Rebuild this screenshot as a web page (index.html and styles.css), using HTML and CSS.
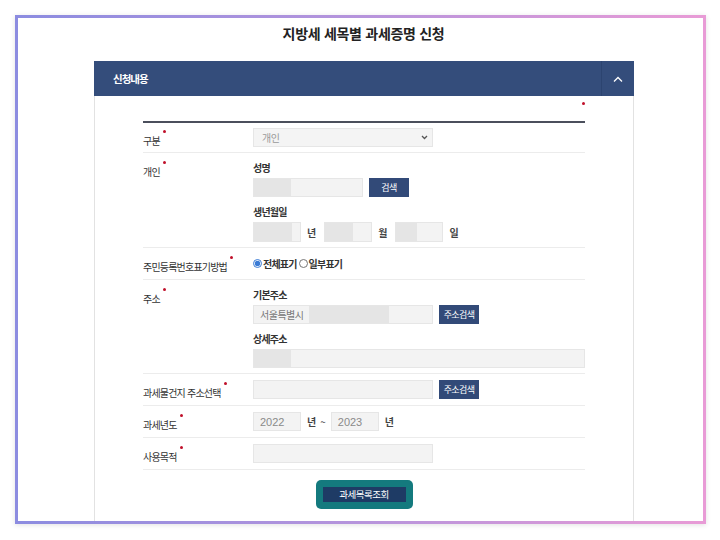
FILE: index.html
```html
<!DOCTYPE html>
<html lang="ko">
<head>
    <meta charset="UTF-8">
    <title>지방세 세목별 과세증명 신청</title>
    <link rel="stylesheet" href="styles.css">
</head>
<body>
    <div class="frame">
        <h1 class="title">지방세 세목별 과세증명 신청</h1>
        <div class="panel">
            <div class="panel-head">
                <span class="panel-title">신청내용</span>
                <span class="panel-toggle">
                    <svg width="10" height="6" viewBox="0 0 10 6"><path d="M1 5.5 L5 1.5 L9 5.5" fill="none" stroke="#fff" stroke-width="1.3"/></svg>
                </span>
            </div>
            <div class="panel-body">
                <div class="req-note"><i class="dot"></i></div>
                <div class="form">
                    <div class="row">
                        <div class="label">구분<i class="dot"></i></div>
                        <div class="field">
                            <div class="select w180">
                                <span>개인</span>
                                <svg width="7" height="5" viewBox="0 0 7 5"><path d="M1 1 L3.5 3.5 L6 1" fill="none" stroke="#555" stroke-width="1.3"/></svg>
                            </div>
                        </div>
                    </div>
                    <div class="row">
                        <div class="label">개인<i class="dot"></i></div>
                        <div class="field stack">
                            <div class="sub">성명</div>
                            <div class="line">
                                <div class="input w110"><span class="mask m37"></span></div>
                                <button class="btn">검색</button>
                            </div>
                            <div class="sub">생년월일</div>
                            <div class="line">
                                <div class="input w48 tall"><span class="mask m38"></span></div>
                                <span class="unit">년</span>
                                <div class="input w48 tall"><span class="mask m28"></span></div>
                                <span class="unit">월</span>
                                <div class="input w48 tall"><span class="mask m21"></span></div>
                                <span class="unit">일</span>
                            </div>
                        </div>
                    </div>
                    <div class="row">
                        <div class="label">주민등록번호표기방법<i class="dot"></i></div>
                        <div class="field radios">
                            <label><input type="radio" name="rrn" checked>전체표기</label>
                            <label><input type="radio" name="rrn">일부표기</label>
                        </div>
                    </div>
                    <div class="row">
                        <div class="label">주소<i class="dot"></i></div>
                        <div class="field stack">
                            <div class="sub">기본주소</div>
                            <div class="line">
                                <div class="input w180 text">서울특별시<span class="mask m80"></span></div>
                                <button class="btn">주소검색</button>
                            </div>
                            <div class="sub">상세주소</div>
                            <div class="line">
                                <div class="input wfull"><span class="mask m37"></span></div>
                            </div>
                        </div>
                    </div>
                    <div class="row">
                        <div class="label">과세물건지 주소선택<i class="dot"></i></div>
                        <div class="field">
                            <div class="input w180"></div>
                            <button class="btn">주소검색</button>
                        </div>
                    </div>
                    <div class="row">
                        <div class="label">과세년도<i class="dot"></i></div>
                        <div class="field">
                            <div class="input w48 text num">2022</div>
                            <span class="unit">년</span>
                            <span class="tilde">~</span>
                            <div class="input w48 text num">2023</div>
                            <span class="unit">년</span>
                        </div>
                    </div>
                    <div class="row">
                        <div class="label">사용목적<i class="dot"></i></div>
                        <div class="field">
                            <div class="input w180"></div>
                        </div>
                    </div>
                </div>
                <div class="actions">
                    <div class="submit-wrap">
                        <button class="submit">과세목록조회</button>
                    </div>
                </div>
            </div>
        </div>
    </div>
</body>
</html>
```

FILE: styles.css
```css
* {
    margin: 0;
    padding: 0;
    box-sizing: border-box;
}

body {
    background: #fff;
    font-family: "Noto Sans CJK KR", "Noto Sans", sans-serif;
    color: #333;
    width: 720px;
    height: 540px;
    overflow: hidden;
}

.frame {
    margin: 15px 0 0 15px;
    width: 691px;
    height: 509px;
    border: 3px solid #a090dc;
    border-image: linear-gradient(90deg, #8c8ce0, #b694dc 50%, #e89bd6) 1;
    box-shadow: 0 1px 5px rgba(0, 0, 0, 0.12);
    overflow: hidden;
    background: #fff;
}

.title {
    font-size: 14px;
    font-weight: 700;
    text-align: center;
    line-height: 20px;
    padding: 5px 0 0 6px;
    height: 43px;
    color: #222;
    letter-spacing: -0.3px;
}

.panel {
    margin-left: 76px;
    width: 540px;
}

.panel-head {
    height: 35px;
    background: #344d7b;
    display: flex;
    align-items: center;
    justify-content: space-between;
}

.panel-title {
    color: #fff;
    font-size: 10.5px;
    font-weight: 700;
    padding-left: 19px;
    letter-spacing: -1px;
}

.panel-toggle {
    width: 33px;
    height: 100%;
    border-left: 1px solid #2c4470;
    display: flex;
    align-items: center;
    justify-content: center;
}

.panel-body {
    border-left: 1px solid #e2e2e2;
    border-right: 1px solid #e2e2e2;
    padding: 0 48px 30px 48px;
    height: 500px;
}

.dot {
    display: inline-block;
    width: 3px;
    height: 3px;
    border-radius: 50%;
    background: #c0102a;
    vertical-align: 12px;
    margin-left: 3px;
}

.req-note {
    height: 25px;
    text-align: right;
}

.req-note .dot {
    vertical-align: top;
    margin-top: 6px;
}

.form {
    border-top: 2px solid #4b4f5c;
}

.row {
    display: flex;
    border-bottom: 1px solid #ececec;
}

.label {
    width: 110px;
    font-size: 10px;
    line-height: 16px;
    padding-top: 8px;
    color: #333;
    letter-spacing: -0.8px;
    white-space: nowrap;
}

.row:first-child .label {
    padding-top: 7px;
}

.field {
    flex: 1;
    display: flex;
    align-items: center;
    padding: 6px 0;
}

.row:first-child .field {
    padding: 5px 0;
}

.field.stack {
    flex-direction: column;
    align-items: flex-start;
    padding: 7px 0 5px;
}

.sub {
    font-size: 10px;
    font-weight: 700;
    line-height: 16px;
    margin-bottom: 2px;
    color: #333;
    letter-spacing: -0.8px;
}

.line {
    display: flex;
    align-items: center;
    margin-bottom: 7px;
    width: 100%;
}

.line:last-child {
    margin-bottom: 0;
}

.input, .select {
    height: 19px;
    background: #f3f3f3;
    border: 1px solid #e6e6e6;
    display: flex;
    align-items: stretch;
    font-size: 10px;
    color: #777;
    overflow: hidden;
    letter-spacing: -0.5px;
}

.input.tall {
    height: 20px;
}

.input.text {
    align-items: center;
    padding-left: 6px;
}

.input.num {
    font-family: "Liberation Sans", Arial, sans-serif;
    font-size: 11px;
    color: #8a8a8a;
    letter-spacing: 0;
}

.select {
    align-items: center;
    justify-content: space-between;
    padding: 0 4px 0 8px;
    background: #f4f4f4;
    color: #999;
}

.w180 { width: 180px; }
.w110 { width: 110px; }
.w48 { width: 48px; }
.wfull { width: 100%; }

.mask {
    display: block;
    background: #e5e5e5;
    height: 100%;
}

.m37 { width: 37px; }
.m38 { width: 38px; }
.m28 { width: 28px; }
.m21 { width: 21px; }
.m80 {
    width: 80px;
    margin-left: 5px;
    height: 17px;
}

.btn {
    width: 40px;
    height: 19px;
    margin-left: 6px;
    background: #324a78;
    color: #fff;
    border: none;
    font-family: inherit;
    font-size: 9px;
    letter-spacing: -0.6px;
    text-align: center;
}

.unit {
    font-size: 10px;
    font-weight: 700;
    color: #444;
    margin: 0 8px 0 6px;
}

.tilde {
    font-size: 10px;
    margin: 0 5px 0 -4px;
    color: #444;
}

.radios {
    font-size: 10px;
    font-weight: 700;
    color: #333;
    letter-spacing: -0.8px;
    line-height: 19px;
}

.radios label {
    display: flex;
    align-items: center;
}

.radios input {
    width: 9px;
    height: 9px;
    margin: 0 1px 0 0;
    accent-color: #3a7bd5;
}

.radios label + label input {
    margin-left: 2px;
}

.actions {
    display: flex;
    justify-content: center;
    padding-top: 10px;
}

.submit-wrap {
    display: flex;
    background: #147a7e;
    border-radius: 5px;
    padding: 7px;
}

.submit {
    width: 83px;
    height: 15px;
    background: #1e3b65;
    color: #fff;
    border: none;
    font-family: inherit;
    font-size: 9.5px;
    line-height: 15px;
    letter-spacing: -0.5px;
}
```
